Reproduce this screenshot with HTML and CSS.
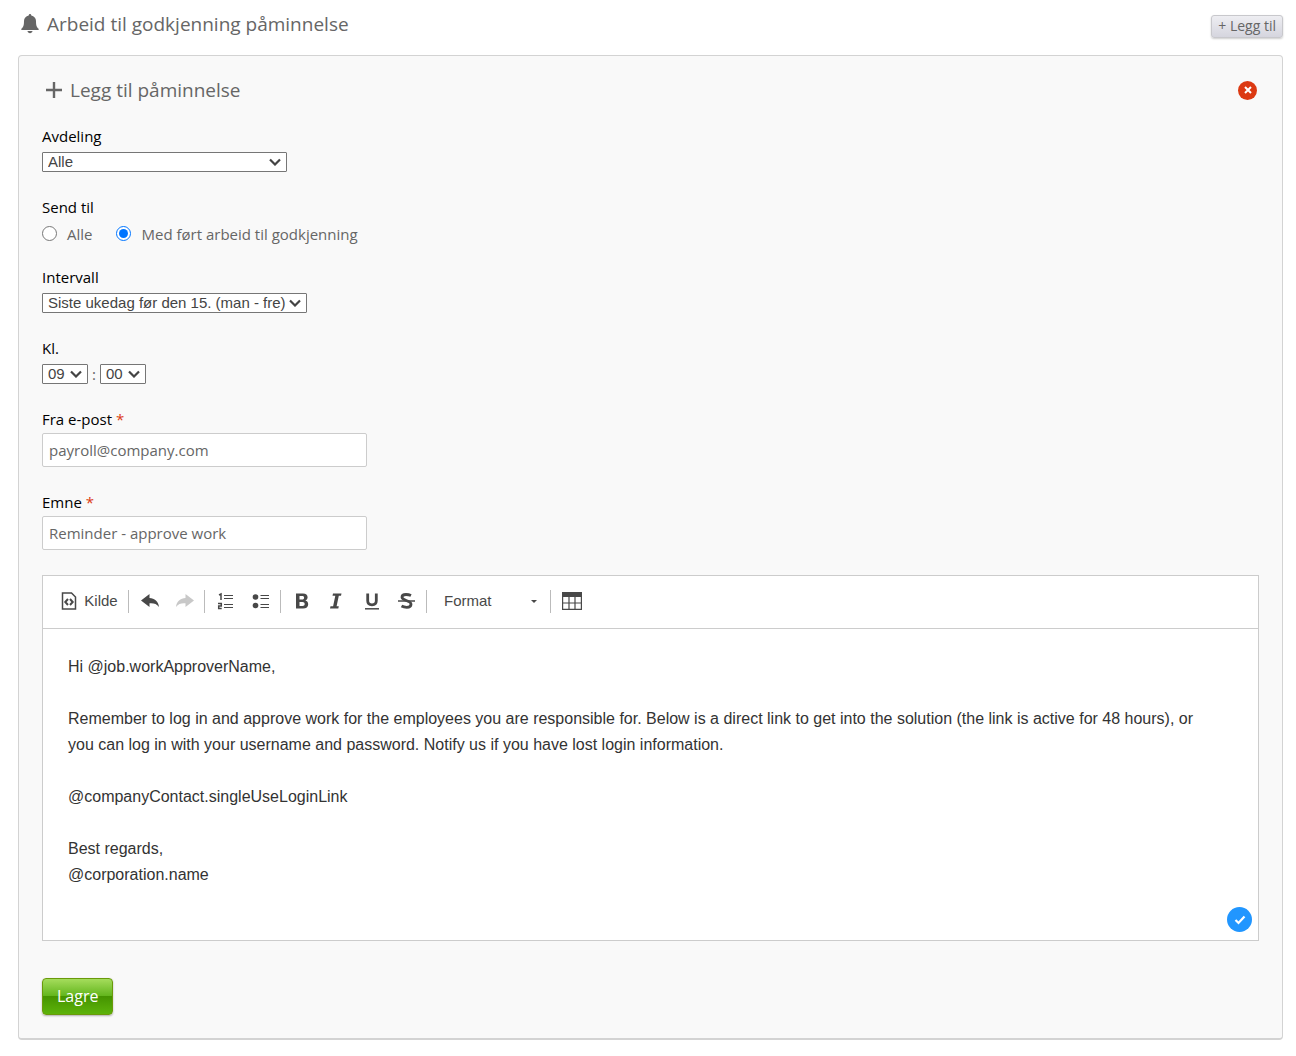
FILE: index.html
```html
<!DOCTYPE html>
<html lang="no">
<head>
<meta charset="utf-8">
<meta name="viewport" content="width=device-width, initial-scale=1">
<title>Arbeid til godkjenning påminnelse</title>
<link rel="stylesheet" href="styles.css">
</head>
<body>
<header class="page-header">
  <h1 class="title">
    <svg class="bell" width="18" height="20" viewBox="0 0 18 20" aria-hidden="true"><path fill="currentColor" d="M9 0c.8 0 1.300.6 1.300 1.500 2.800.6 4.700 2.700 4.700 5.500 0 4.500.7 6.200 2.600 7.800.4.400.3 1.200-.5 1.200H.9c-.8 0-.9-.8-.5-1.200C2.300 13.200 3 11.500 3 7c0-2.800 1.900-4.900 4.700-5.500C7.700.6 8.200 0 9 0zM6.500 17h5c-.2 1.400-1.200 2.200-2.500 2.200S6.700 18.400 6.500 17z"/></svg>
    Arbeid til godkjenning påminnelse
  </h1>
  <button class="add-button" type="button">+ Legg til</button>
</header>
<main class="panel">
  <div class="panel-header">
    <h2 class="title subtitle">
      <svg width="16" height="16" viewBox="0 0 16 16" aria-hidden="true"><path stroke="currentColor" stroke-width="2.400" d="M8 0v16M0 8h16"/></svg>
      Legg til påminnelse
    </h2>
    <button class="close-button" type="button" aria-label="Lukk">
      <svg width="8" height="8" viewBox="0 0 8 8" aria-hidden="true"><path stroke="#fff" stroke-width="2" d="M1 1l6 6M7 1L1 7"/></svg>
    </button>
  </div>
  <form class="form">
    <div class="field">
      <label class="label" for="department">Avdeling</label>
      <select class="select select-wide" id="department"><option>Alle</option></select>
    </div>
    <fieldset class="field field-radios">
      <legend class="label">Send til</legend>
      <div class="radios">
        <label class="radio"><input type="radio" name="recipients">Alle</label>
        <label class="radio"><input type="radio" name="recipients" checked>Med ført arbeid til godkjenning</label>
      </div>
    </fieldset>
    <div class="field">
      <label class="label" for="interval">Intervall</label>
      <select class="select" id="interval"><option>Siste ukedag før den 15. (man - fre)</option></select>
    </div>
    <div class="field">
      <label class="label" for="hour">Kl.</label>
      <div class="time">
        <select class="select select-time" id="hour"><option>09</option></select>
        <span>:</span>
        <select class="select select-time" aria-label="Minutter"><option>00</option></select>
      </div>
    </div>
    <div class="field field-text">
      <label class="label" for="sender">Fra e-post <span class="required">*</span></label>
      <input class="input" id="sender" type="email" value="payroll@company.com">
    </div>
    <div class="field field-text">
      <label class="label" for="subject">Emne <span class="required">*</span></label>
      <input class="input" id="subject" type="text" value="Reminder - approve work">
    </div>
    <section class="editor" aria-label="Melding">
      <div class="toolbar" role="toolbar">
        <div class="group">
          <button class="tool source" type="button">
            <svg width="16" height="18" viewBox="0 0 16 18" aria-hidden="true"><path fill="none" stroke="currentColor" stroke-width="1.500" d="M1.500 1h9l4 4v12h-13z"/><path fill="none" stroke="currentColor" stroke-width="2" d="M7 7L4.300 10 7 13M9 7l2.700 3L9 13"/></svg>
            Kilde
          </button>
        </div>
        <div class="group">
          <button class="tool" type="button" aria-label="Angre"><svg width="18" height="16" viewBox="0 0 18 16"><path fill="currentColor" d="M0 7.500L8.500 1v4c5 .2 9 3.500 9.500 9-2.500-3.500-5-4-9.500-3.800V14z"/></svg></button>
          <button class="tool" type="button" aria-label="Gjør om" disabled><svg width="18" height="16" viewBox="0 0 18 16"><path fill="currentColor" d="M18 7.500L9.500 1v4C4.500 5.200.5 8.500 0 14c2.500-3.500 5-4 9.500-3.800V14z"/></svg></button>
        </div>
        <div class="group">
          <button class="tool" type="button" aria-label="Nummerert liste"><svg width="18" height="18" viewBox="0 0 18 18"><path fill="none" stroke="currentColor" stroke-width="1.500" d="M2 3l2-1v6M1 11.500h3.300v2.500H1.700v2.500h3"/><path stroke="currentColor" d="M7 3.500h9M7 6.500h9M7 12.500h9M7 15.500h9"/></svg></button>
          <button class="tool" type="button" aria-label="Punktliste"><svg width="18" height="18" viewBox="0 0 18 18"><circle cx="3.500" cy="5" r="2.800" fill="currentColor"/><circle cx="3.500" cy="13.500" r="2.800" fill="currentColor"/><path stroke="currentColor" d="M8.500 3.500H17M8.500 6.500H17M8.500 12.500H17M8.500 15.500H17"/></svg></button>
        </div>
        <div class="group">
          <button class="tool" type="button" aria-label="Fet"><svg width="16" height="18" viewBox="0 0 16 18"><path fill="currentColor" fill-rule="evenodd" d="M2 1.500h7c3 0 4.600 1.500 4.600 3.800 0 1.600-.8 2.700-2.300 3.200 1.900.5 2.900 1.800 2.900 3.700 0 2.700-1.900 4.300-5.200 4.300H2zM5.500 4v3.500h2.700c1.200 0 1.900-.6 1.900-1.800S9.400 4 8.200 4zM5.500 10v4h3c1.400 0 2.200-.7 2.200-2s-.8-2-2.200-2z"/></svg></button>
          <button class="tool" type="button" aria-label="Kursiv"><svg width="16" height="18" viewBox="0 0 16 18"><path fill="currentColor" d="M4 1.500h8.500l-.5 2.300H9.800L7.600 14.200h2.200l-.5 2.300H1l.5-2.300h2.600L6.300 3.800H3.500z"/></svg></button>
          <button class="tool" type="button" aria-label="Understreket"><svg width="16" height="18" viewBox="0 0 16 18"><path fill="none" stroke="currentColor" stroke-width="2.800" d="M3.700 1.500v7.300c0 2.700 1.500 4 4.300 4s4.300-1.300 4.300-4V1.500"/><path stroke="currentColor" stroke-width="1.500" d="M1 16.800h14"/></svg></button>
          <button class="tool" type="button" aria-label="Gjennomstreket"><svg width="17" height="18" viewBox="0 0 17 18"><path fill="none" stroke="currentColor" stroke-width="2.800" d="M13 3.500C11 2.600 9.800 2.500 8 2.500c-2.500 0-4 1-4 2.800C4 9 13 8 13 12.300c0 2-1.600 3-4.200 3-2 0-3.700-.4-5.300-1.300"/><path stroke="currentColor" stroke-width="1.500" d="M0 9h17"/></svg></button>
        </div>
        <div class="group">
          <button class="tool format" type="button">Format <svg width="6" height="3" viewBox="0 0 6 3" aria-hidden="true"><path fill="currentColor" d="M0 0h6L3 3z"/></svg></button>
        </div>
        <div class="group">
          <button class="tool" type="button" aria-label="Tabell"><svg width="20" height="18" viewBox="0 0 20 18"><path fill="currentColor" d="M0 0h20v5H0z"/><path fill="none" stroke="currentColor" stroke-width="1.200" d="M.6 4v13.400h18.800V4M0 11h20M7 5v12M13 5v12"/></svg></button>
        </div>
      </div>
      <div class="message" contenteditable="true" spellcheck="false" role="textbox" aria-label="Meldingstekst">
        <p>Hi @job.workApproverName,</p>
        <p>Remember to log in and approve work for the employees you are responsible for. Below is a direct link to get into the solution (the link is active for 48 hours), or you can log in with your username and password. Notify us if you have lost login information.</p>
        <p>@companyContact.singleUseLoginLink</p>
        <p>Best regards,<br>@corporation.name</p>
      </div>
      <button class="checker" type="button" aria-label="Stavekontroll"><svg width="12" height="10" viewBox="0 0 12 10"><path fill="none" stroke="#fff" stroke-width="2.200" d="M1.500 5l3 3 6-6.500"/></svg></button>
    </section>
    <button class="save-button" type="button">Lagre</button>
  </form>
</main>
</body>
</html>
```
FILE: styles.css
```css
* {
  box-sizing: border-box;
}

body {
  margin: 0;
  padding: 8px 13px 16px 18px;
  background: #fff;
  color: #666;
  font: 15px/20px "Open Sans", sans-serif;
}

button,
input {
  font: inherit;
  margin: 0;
}

.page-header,
.panel-header {
  display: flex;
  justify-content: space-between;
  align-items: center;
}

.page-header {
  padding-left: 3px;
  margin-bottom: 15px;
}

.title {
  display: flex;
  align-items: center;
  gap: 8px;
  margin: 0;
  font-size: 19px;
  line-height: 32px;
  font-weight: 400;
}

.add-button {
  height: 23px;
  margin-top: 4px;
  padding: 0 6px;
  border: 1px solid #c8c8cc;
  border-radius: 3px;
  background: linear-gradient(#eeeef2, #d5d5de);
  box-shadow: 0 1px 2px rgba(0, 0, 0, .2);
  color: #666;
  font-size: 14px;
  line-height: 20px;
}

.panel {
  padding: 18px 23px 23px;
  border: 1px solid #d3d3d3;
  border-bottom-width: 2px;
  border-radius: 4px;
  background: #f9f9f9;
}

.panel-header {
  padding-left: 4px;
  margin-bottom: 20px;
}

.close-button,
.checker {
  display: flex;
  align-items: center;
  justify-content: center;
  padding: 0;
  border: 0;
  border-radius: 50%;
}

.close-button {
  width: 19px;
  height: 19px;
  margin-right: 2px;
  background: #dc3912;
}

.field {
  display: flex;
  flex-direction: column;
  align-items: flex-start;
  gap: 6px;
  margin: 0 0 25px;
  padding: 0;
  border: 0;
}

.label {
  padding: 0;
  color: #000;
}

.required {
  color: #dc3912;
}

.field-radios {
  display: block;
  margin-bottom: 23px;
}

.field-text {
  gap: 4px;
}

.radios {
  display: flex;
  gap: 24px;
  padding-top: 7px;
}

.radio {
  display: flex;
  align-items: center;
  gap: 10px;
}

.radio input {
  width: 15px;
  height: 15px;
  margin: 0 0 2px;
}

.select {
  appearance: none;
  height: 20px;
  margin: 0;
  padding: 0 20px 1px 5px;
  border: 1px solid #767676;
  border-radius: 1px;
  background: #fff url("data:image/svg+xml,%3Csvg xmlns='http://www.w3.org/2000/svg' width='12' height='8'%3E%3Cpath d='M1 1.500l5 5 5-5' fill='none' stroke='%23444' stroke-width='2.200'/%3E%3C/svg%3E") no-repeat right 5px center;
  color: #444;
  font: 15px/17px "Liberation Sans", Arial, sans-serif;
}

.select-wide {
  width: 245px;
}

.select-time {
  width: 46px;
}

.time {
  display: flex;
  align-items: center;
  gap: 4px;
  height: 20px;
}

.input {
  width: 325px;
  height: 34px;
  padding: 0 6px;
  border: 1px solid #ccc;
  border-radius: 2px;
  background: #fff;
  color: #666;
}

.editor {
  position: relative;
  margin-bottom: 37px;
  border: 1px solid #ccc;
  background: #fff;
  font-family: "Liberation Sans", Arial, sans-serif;
}

.toolbar {
  display: flex;
  align-items: center;
  min-height: 53px;
  padding: 0 12px 2px;
  border-bottom: 1px solid #ccc;
}

.group {
  display: flex;
  align-items: center;
  height: 23px;
}

.group + .group {
  padding: 0 2px 0 3px;
  border-left: 1px solid #bbb;
}

.tool {
  display: flex;
  align-items: center;
  justify-content: center;
  width: 35px;
  height: 23px;
  padding: 0;
  border: 0;
  background: none;
  color: #484848;
}

.tool:disabled {
  color: #c8c8c8;
}

.source {
  gap: 7px;
  width: 73px;
  padding-right: 4px;
}

.format {
  justify-content: space-between;
  width: 118px;
  padding: 0 11px 0 14px;
}

.message {
  min-height: 311px;
  padding: 25px 40px 25px 25px;
  color: #333;
  font-size: 16px;
  line-height: 26px;
}

.message p {
  margin: 0 0 26px;
}

.checker {
  position: absolute;
  right: 6px;
  bottom: 8px;
  width: 25px;
  height: 25px;
  background: #2196ff;
}

.save-button {
  display: block;
  height: 37px;
  padding: 0 14px 2px;
  border: 1px solid #6a9a0a;
  border-radius: 4px;
  background: linear-gradient(#a5dc5c, #62b51c 49%, #459400 50%, #5db30b);
  box-shadow: 0 1px 2px rgba(0, 0, 0, .3);
  color: #fff;
  font-size: 16px;
}
```
